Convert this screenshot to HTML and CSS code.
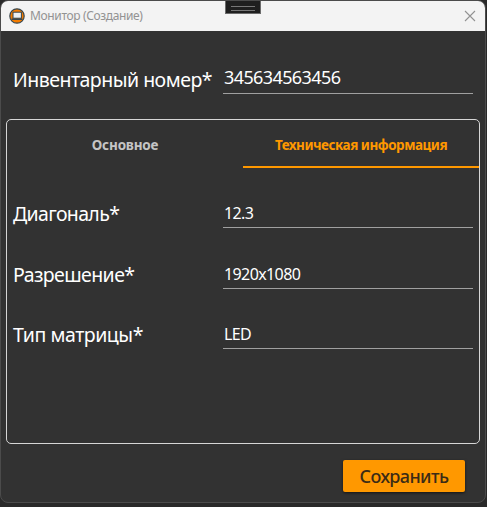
FILE: index.html
```
<!DOCTYPE html>
<html lang="ru">
<head>
<meta charset="utf-8">
<title>Монитор (Создание)</title>
<link rel="stylesheet" href="styles.css">
</head>
<body>
<div class="window">
  <header class="titlebar">
    <svg class="app-icon" width="16" height="16" viewBox="0 0 16 16">
      <circle cx="8" cy="8" r="7.2" fill="#f57c00" stroke="#37474f" stroke-width="1.2"/>
      <rect x="4" y="4.2" width="8.4" height="6" fill="#eceff1" stroke="#37474f" stroke-width="1"/>
      <path d="M2.5 11.3h11" stroke="#37474f" stroke-width="1.4"/>
    </svg>
    <span class="title">Монитор (Создание)</span>
    <svg class="close" width="12" height="12" viewBox="0 0 12 12"><path d="M1 1l10 10M11 1L1 11" stroke="#929292" stroke-width="1.1"/></svg>
    <div class="handle"></div>
  </header>
  <main class="content">
    <div class="row row-main">
      <label class="label l-number">Инвентарный номер*</label>
      <div class="field large">345634563456</div>
    </div>
    <section class="panel">
      <nav class="tabs">
        <div class="tab"><span class="t-main">Основное</span></div>
        <div class="tab active"><span class="t-tech">Техническая информация</span></div>
      </nav>
      <div class="row">
        <label class="label l-diag">Диагональ*</label>
        <div class="field">12.3</div>
      </div>
      <div class="row row-second">
        <label class="label l-res">Разрешение*</label>
        <div class="field">1920x1080</div>
      </div>
      <div class="row">
        <label class="label l-type">Тип матрицы*</label>
        <div class="field">LED</div>
      </div>
    </section>
    <footer class="actions"><button class="save"><span>Сохранить</span></button></footer>
  </main>
</div>
</body>
</html>
```
FILE: styles.css
```
* { box-sizing: border-box; }
body {
  margin: 0;
  height: 507px;
  overflow: hidden;
  background: #292929;
  font-family: "Noto Sans", "Open Sans", sans-serif;
}
.window {
  width: 486px;
  height: 503px;
  border: 1px solid #4b4b4b;
  border-radius: 8px;
  background: #323232;
  overflow: hidden;
}
.titlebar {
  position: relative;
  display: flex;
  align-items: center;
  height: 30px;
  padding: 0 9px 0 8px;
  background: #f3f3f3;
}
.title {
  margin-left: 5px;
  font-size: 12px;
  line-height: 16px;
  letter-spacing: -0.36px;
  color: #929292;
  white-space: nowrap;
}
.close { margin-left: auto; }
.handle {
  position: absolute;
  left: 224px;
  top: -1px;
  width: 36px;
  height: 14px;
  border: 1px solid #6b6b6b;
  background: #1f1f1f;
}
.handle::before {
  content: "";
  position: absolute;
  left: 5px;
  top: 5px;
  width: 24px;
  height: 3px;
  border: solid #777;
  border-width: 1px 0;
}
.content { padding: 0 5px; }
.row {
  display: grid;
  grid-template-columns: 210px 250px;
  height: 60px;
  padding-left: 6px;
  align-items: end;
}
.row-second { height: 61px; }
.row-main { height: 63px; padding-left: 7px; }
.label {
  font-size: 19.5px;
  line-height: 28px;
  color: #fff;
  white-space: nowrap;
}
.l-number { letter-spacing: -0.5px; }
.l-diag { letter-spacing: -0.65px; }
.l-res { letter-spacing: -0.6px; }
.l-type { letter-spacing: -0.45px; }
.field {
  height: 32px;
  padding-left: 1px;
  border-bottom: 1px solid #a0a0a0;
  font-size: 16px;
  line-height: 34px;
  letter-spacing: -0.6px;
  color: #fff;
  white-space: nowrap;
}
.field.large { font-size: 18px; line-height: 31px; }
.panel {
  height: 325px;
  margin-top: 25px;
  border: 1px solid #d6d6d6;
  border-radius: 5px;
}
.tabs { display: grid; grid-template-columns: 1fr 1fr; height: 48px; }
.tab {
  display: flex;
  justify-content: center;
  padding-top: 15px;
  font-size: 13.5px;
  font-weight: 700;
  line-height: 20px;
  color: #c5c5c5;
  white-space: nowrap;
}
.t-main { letter-spacing: -0.2px; }
.t-tech { letter-spacing: -0.5px; }
.tab.active { color: #ff9800; border-bottom: 2px solid #ff9800; }
.actions { display: flex; justify-content: flex-end; padding: 16px 15px 0 0; }
.save {
  display: flex;
  justify-content: center;
  width: 122px;
  height: 32px;
  padding: 0;
  border: 0;
  border-radius: 2px;
  background: #ff9800;
  box-shadow: 0 1px 3px rgba(0, 0, 0, .6);
  font: 500 18px/33px "Noto Sans", "Open Sans", sans-serif;
  letter-spacing: -0.6px;
  color: #3b2b16;
}
```
